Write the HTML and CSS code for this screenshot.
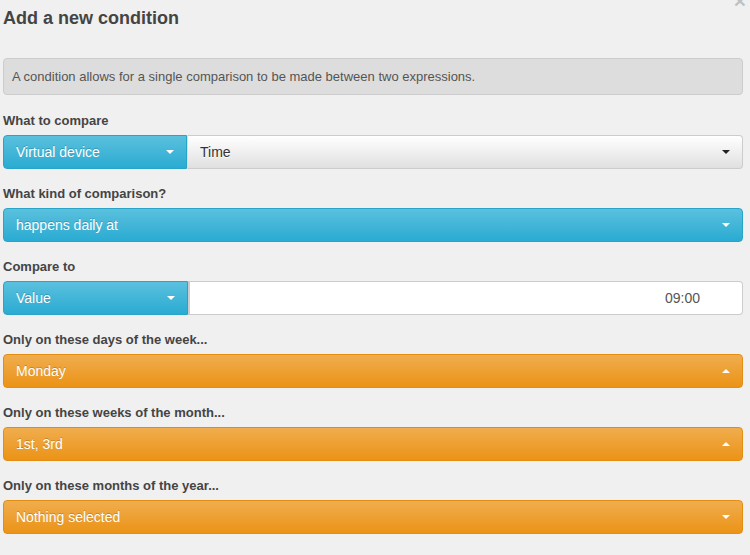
FILE: index.html
```html
<!DOCTYPE html>
<html>
<head>
<meta charset="utf-8">
<link rel="stylesheet" href="styles.css">
</head>
<body>
<div class="modal">
  <button class="close" type="button">×</button>
  <h4 class="title">Add a new condition</h4>
  <div class="info">A condition allows for a single comparison to be made between two expressions.</div>

  <div class="group">
    <label class="label">What to compare</label>
    <div class="row">
      <div class="btn btn-info btn-left w184"><span>Virtual device</span><i class="caret"></i></div>
      <div class="btn btn-default btn-right grow"><span>Time</span><i class="caret dark"></i></div>
    </div>
  </div>

  <div class="group">
    <label class="label">What kind of comparison?</label>
    <div class="btn btn-info"><span>happens daily at</span><i class="caret"></i></div>
  </div>

  <div class="group">
    <label class="label">Compare to</label>
    <div class="row">
      <div class="btn btn-info btn-left w185"><span>Value</span><i class="caret"></i></div>
      <div class="input grow">09:00</div>
    </div>
  </div>

  <div class="group">
    <label class="label">Only on these days of the week...</label>
    <div class="btn btn-warning"><span>Monday</span><i class="caret up"></i></div>
  </div>

  <div class="group">
    <label class="label">Only on these weeks of the month...</label>
    <div class="btn btn-warning"><span>1st, 3rd</span><i class="caret up"></i></div>
  </div>

  <div class="group">
    <label class="label">Only on these months of the year...</label>
    <div class="btn btn-warning"><span>Nothing selected</span><i class="caret"></i></div>
  </div>
</div>
</body>
</html>
```

FILE: styles.css
```css
* { box-sizing: border-box; }
html, body {
  margin: 0;
  padding: 0;
  background: #f0f0f0;
  font-family: "Liberation Sans", Arial, sans-serif;
  color: #444;
  overflow: hidden;
}
.modal {
  position: relative;
  width: 740px;
  margin-left: 3px;
}
.close {
  position: absolute;
  top: -18px;
  right: -3px;
  border: 0;
  background: transparent;
  padding: 0;
  font-family: "Liberation Sans", Arial, sans-serif;
  font-size: 21px;
  font-weight: bold;
  line-height: 1;
  color: #000;
  opacity: 0.2;
}
.title {
  margin: 8px 0 30px 0;
  font-size: 18px;
  line-height: 20px;
  font-weight: bold;
  color: #444;
}
.info {
  background: #dddddd;
  border: 1px solid #cccccc;
  border-radius: 4px;
  padding: 9px 8px;
  font-size: 13px;
  line-height: 17px;
  color: #555;
  margin-bottom: 16px;
}
.group {
  margin-bottom: 15px;
}
.label {
  display: block;
  font-size: 13px;
  line-height: 18px;
  font-weight: bold;
  color: #444;
  padding-top: 1px;
  margin-bottom: 5px;
}
.row {
  display: flex;
}
.grow { flex: 1; }
.w184 { width: 184px; flex: none; }
.w185 { width: 185px; flex: none; }
.btn {
  display: flex;
  align-items: center;
  justify-content: space-between;
  height: 34px;
  padding: 0 12px;
  border: 1px solid;
  border-radius: 4px;
  font-size: 14px;
  line-height: 20px;
}
.btn-info {
  color: #fff;
  background: linear-gradient(to bottom, #5bc0de 0%, #2aabd2 100%);
  border-color: #28a4c9;
  text-shadow: 0 -1px 0 rgba(0,0,0,0.2);
}
.btn-warning {
  color: #fff;
  background: linear-gradient(to bottom, #f0ad4e 0%, #eb9316 100%);
  border-color: #e38d13;
  text-shadow: 0 -1px 0 rgba(0,0,0,0.2);
}
.btn-default {
  color: #333;
  background: linear-gradient(to bottom, #ffffff 0%, #e0e0e0 100%);
  border-color: #ccc;
  text-shadow: 0 1px 0 #fff;
}
.btn-left {
  border-top-right-radius: 0;
  border-bottom-right-radius: 0;
}
.btn-right {
  border-top-left-radius: 0;
  border-bottom-left-radius: 0;
  border-left-color: #ddd;
}
.caret {
  display: inline-block;
  width: 0;
  height: 0;
  border-top: 4px solid #fff;
  border-left: 4px solid transparent;
  border-right: 4px solid transparent;
}
.caret.dark { border-top-color: #222; }
.caret.up {
  border-top: 0;
  border-bottom: 4px solid #fff;
}
.input {
  height: 34px;
  background: #fff;
  border: 1px solid #ccc;
  border-left: 2px solid #ccc;
  border-radius: 0 4px 4px 0;
  font-size: 14px;
  line-height: 32px;
  color: #555;
  text-align: right;
  padding-right: 42px;
}
```
